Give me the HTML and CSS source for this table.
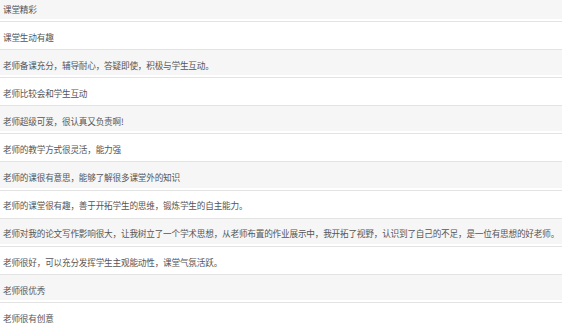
FILE: index.html
```html
<!DOCTYPE html>
<html lang="zh-CN">
<head>
<meta charset="utf-8">
<title>评价</title>
<link rel="stylesheet" href="styles.css">
</head>
<body>
<ul class="comments">
  <li class="row odd">课堂精彩</li>
  <li class="row">课堂生动有趣</li>
  <li class="row odd">老师备课充分，辅导耐心，答疑即使，积极与学生互动。</li>
  <li class="row">老师比较会和学生互动</li>
  <li class="row odd">老师超级可爱，很认真又负责啊!</li>
  <li class="row">老师的教学方式很灵活，能力强</li>
  <li class="row odd">老师的课很有意思，能够了解很多课堂外的知识</li>
  <li class="row">老师的课堂很有趣，善于开拓学生的思维，锻炼学生的自主能力。</li>
  <li class="row odd">老师对我的论文写作影响很大，让我树立了一个学术思想，从老师布置的作业展示中，我开拓了视野，认识到了自己的不足，是一位有思想的好老师。</li>
  <li class="row">老师很好，可以充分发挥学生主观能动性，课堂气氛活跃。</li>
  <li class="row odd">老师很优秀</li>
  <li class="row">老师很有创意</li>
</ul>
</body>
</html>
```
FILE: styles.css
```css
html, body {
  margin: 0;
  padding: 0;
  background: #ffffff;
  overflow: hidden;
}
.comments {
  list-style: none;
  margin: -7.1px 0 0 0;
  padding: 0;
  font-family: "Noto Sans CJK SC", "Noto Sans", sans-serif;
  font-size: 8.65px;
  letter-spacing: -0.2px;
  color: #555555;
}
.row {
  box-sizing: border-box;
  height: 26.1px;
  border-top: 1px solid #e3e3e3;
  margin-bottom: 2px;
  padding: 7.8px 0 3.3px 3px;
  line-height: 14px;
  white-space: nowrap;
}
.odd {
  background: #f6f6f6;
}
```
